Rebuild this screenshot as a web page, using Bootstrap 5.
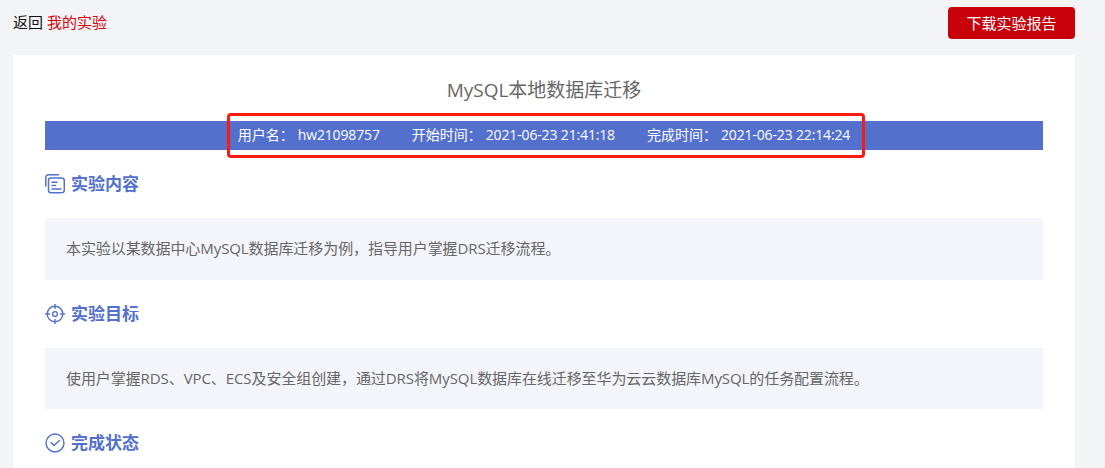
<!DOCTYPE html>
<html lang="zh-CN">
<head>
<meta charset="utf-8">
<title>实验报告</title>
<link href="https://cdn.jsdelivr.net/npm/bootstrap@5.3.0/dist/css/bootstrap.min.css" rel="stylesheet">
<style>
html,body{height:468px;overflow:hidden}
body{background:#f3f4f6;font-family:"Open Sans","Noto Sans CJK SC",sans-serif;font-size:15px;color:#666}
.top-bar{height:55px;padding:7px 30px 0 13px}
.crumb{font-size:15px;line-height:20px;color:#111;padding-top:5px}
.crumb a{color:#d9000b;text-decoration:none}
.btn-report{background:#c7000b;color:#fff;border:0;border-radius:4px;width:127px;height:32px;padding:0;font-size:15px;line-height:32px}
.btn-report:hover{background:#c7000b;color:#fff}
.sheet{background:#fff;margin:0 30px 0 13px;padding:0 32px;height:413px;position:relative}
.sheet-title{font-size:19px;line-height:25px;color:#666;text-align:center;padding-top:23px;height:66px;margin:0;font-weight:400}
.info-bar{background:#5370cd;color:#fff;height:29px;line-height:28px;font-size:14px;gap:32px;letter-spacing:-.15px}
.info-bar b{font-weight:400;margin-right:4px;letter-spacing:0}
.mark-box{position:absolute;left:214px;top:58px;width:638px;height:45px;border:3px solid #fb1a0f;border-radius:4px}
.sec-head{height:68px;gap:6px;color:#5370cd;font-size:17px;font-weight:700;padding-bottom:1px}
.sec-head svg{width:20px;height:20px;flex:none}
.sec-body{background:#f4f5fa;height:62px;line-height:60px;padding-left:21px;font-size:15px;color:#666;letter-spacing:-.08px}
.sec-body.last-body{height:61px}
</style>
</head>
<body>
<div class="top-bar d-flex justify-content-between align-items-start">
  <div class="crumb">返回 <a href="#">我的实验</a></div>
  <button class="btn btn-report" type="button">下载实验报告</button>
</div>
<div class="sheet">
  <h1 class="sheet-title">MySQL本地数据库迁移</h1>
  <div class="info-bar d-flex justify-content-center">
    <span><b>用户名：</b>hw21098757</span>
    <span><b>开始时间：</b>2021-06-23 21:41:18</span>
    <span><b>完成时间：</b>2021-06-23 22:14:24</span>
  </div>
  <div class="mark-box"></div>

  <div class="sec-head d-flex align-items-center">
    <svg viewBox="0 0 20 20" fill="none" stroke="#5370cd" stroke-width="1.5" stroke-linecap="round" stroke-linejoin="round"><path d="M.8 12V3.5A2.7 2.7 0 0 1 3.5.8h10"/><rect x="3.5" y="4" width="15.8" height="14.8" rx="2.5"/><path d="M7 8.2h5M7 11.5h3.5M7 15h9"/></svg>
    <span>实验内容</span>
  </div>
  <div class="sec-body">本实验以某数据中心MySQL数据库迁移为例，指导用户掌握DRS迁移流程。</div>

  <div class="sec-head d-flex align-items-center">
    <svg viewBox="0 0 20 20" fill="none" stroke="#5370cd" stroke-width="1.4" stroke-linecap="round"><circle cx="10" cy="10" r="7.8"/><circle cx="10" cy="10" r="2.4"/><path d="M10 .5v4M10 15.5v4M.5 10h4M15.5 10h4"/></svg>
    <span>实验目标</span>
  </div>
  <div class="sec-body last-body">使用户掌握RDS、VPC、ECS及安全组创建，通过DRS将MySQL数据库在线迁移至华为云云数据库MySQL的任务配置流程。</div>

  <div class="sec-head d-flex align-items-center">
    <svg viewBox="0 0 20 20" fill="none" stroke="#5370cd" stroke-width="1.4" stroke-linecap="round" stroke-linejoin="round"><circle cx="10" cy="10" r="9"/><path d="M6 9.5l3 3 5.5-5"/></svg>
    <span>完成状态</span>
  </div>
</div>
<script src="https://cdn.jsdelivr.net/npm/bootstrap@5.3.0/dist/js/bootstrap.bundle.min.js"></script>
</body>
</html>
